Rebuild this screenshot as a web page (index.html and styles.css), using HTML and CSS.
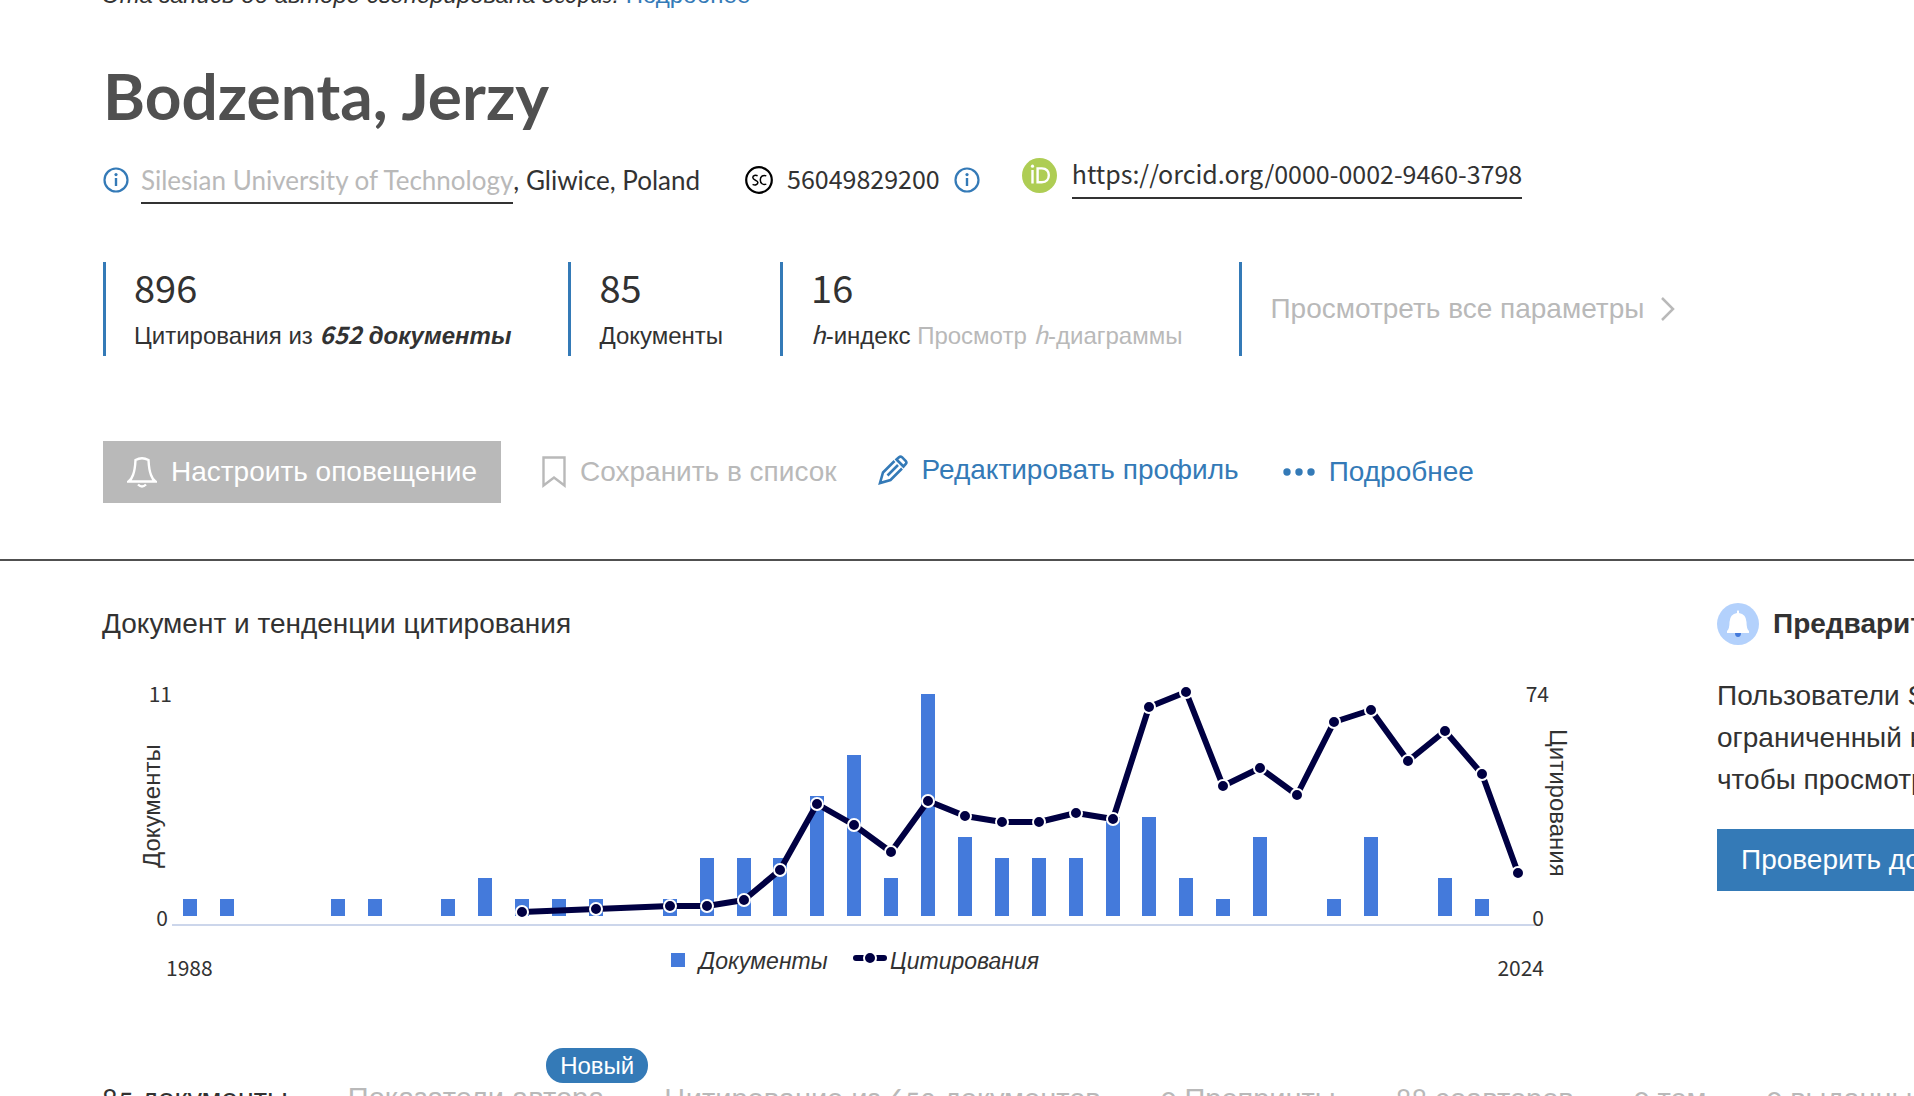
FILE: index.html
```html
<!DOCTYPE html>
<html lang="ru">
<head>
<meta charset="utf-8">
<title>Bodzenta, Jerzy</title>
<link rel="stylesheet" href="styles.css">
</head>
<body>
<main class="page">
  <header class="profile">
    <p class="note">Эта запись об авторе сгенерирована <span class="humanist">Scopus</span>. <a class="note-link" href="#about">Подробнее</a></p>
    <h1 class="name humanist">Bodzenta, Jerzy</h1>

    <div class="ids latin">
      <div class="id-group affiliation humanist">
        <svg class="info" viewBox="0 0 26 26" aria-hidden="true"><circle cx="13" cy="13" r="11.5" fill="none" stroke="currentColor" stroke-width="2.2"/><path d="M13 11v8" stroke="currentColor" stroke-width="2.4"/><circle cx="13" cy="7.6" r="1.6" fill="currentColor"/></svg>
        <span><a class="underlined muted" href="#affiliation">Silesian University of Technology</a>, Gliwice, Poland</span>
      </div>
      <div class="id-group scopus-id">
        <svg class="sc" viewBox="0 0 28 28" aria-hidden="true"><circle cx="14" cy="14" r="12.8" fill="none" stroke="#000" stroke-width="2.2"/><path d="M12.6 9.8C10.5 8.8 7.8 9.5 7.8 11.6c0 3 5.1 2.2 5.1 5 0 2.200-3 2.900-5.300 1.700M21.300 9.900c-3.500-1.400-6 .8-6 4.100s2.600 5.300 6 4.100" fill="none" stroke="#000" stroke-width="1.500"/></svg>
        <span>56049829200</span>
        <svg class="info" viewBox="0 0 26 26" aria-hidden="true"><circle cx="13" cy="13" r="11.5" fill="none" stroke="currentColor" stroke-width="2.2"/><path d="M13 11v8" stroke="currentColor" stroke-width="2.4"/><circle cx="13" cy="7.6" r="1.6" fill="currentColor"/></svg>
      </div>
      <div class="id-group orcid">
        <svg class="orcid-icon" viewBox="0 0 35 35" aria-hidden="true"><circle cx="17.500" cy="17.500" r="17.500" fill="#aecd54"/><g fill="none" stroke="#fff" stroke-width="2.400"><path d="M10.500 12v13.500M15.600 10.400v13.900h4.200c4.800 0 7-3.200 7-7s-2.200-6.900-7-6.900z"/></g><circle cx="10.500" cy="8.200" r="1.600" fill="#fff"/></svg>
        <a class="underlined" href="#orcid">https://orcid.org/0000-0002-9460-3798</a>
      </div>
    </div>

    <div class="stats">
      <div class="stat"><span class="figure latin">896</span><span class="label">Цитирования из <b><i><span class="latin">652</span> документы</i></b></span></div>
      <div class="stat"><span class="figure latin">85</span><span class="label">Документы</span></div>
      <div class="stat"><span class="figure latin">16</span><span class="label"><i class="latin">h</i>-индекс <a class="muted" href="#h">Просмотр <i class="latin">h</i>-диаграммы</a></span></div>
      <div class="stat stat-link"><a class="muted" href="#metrics">Просмотреть все параметры</a><svg class="chevron" viewBox="0 0 16 26" aria-hidden="true"><path d="M2 2l11 11L2 24" fill="none" stroke="currentColor" stroke-width="2.500"/></svg></div>
    </div>

    <div class="actions">
      <button class="action primary" type="button">
        <svg class="bell" viewBox="0 0 30 32" aria-hidden="true"><g fill="none" stroke="currentColor" stroke-width="2.400"><path d="M8.500 4Q15 .500 21.500 4Q22 14 24 19Q25.500 23.500 28.500 25.500H1.500Q4.500 23.500 6 19Q8 14 8.500 4z"/><path d="M11 28.500Q15 32.500 19 28.500"/></g></svg>Настроить оповещение</button>
      <button class="action muted save" type="button">
        <svg class="bookmark" viewBox="0 0 24 32" aria-hidden="true"><path d="M1.500 1.500h21v28L12 21.500 1.500 29.500z" fill="none" stroke="currentColor" stroke-width="2.400"/></svg>Сохранить в список</button>
      <button class="action edit" type="button">
        <svg class="pencil" viewBox="0 0 30 30" aria-hidden="true"><g fill="none" stroke="currentColor" stroke-width="2.600"><path d="M16.500 6L5 17.500 2 28l10.500-3L24 13.500M9.500 20.500L20 10M18.500 4.500l2.500-2.300q1.500-1.200 3 0l3.800 3.800q1.200 1.500 0 3L25.500 11.500z"/></g></svg>Редактировать профиль</button>
      <button class="action more" type="button">
        <svg class="dots" viewBox="0 0 32 8" fill="currentColor" aria-hidden="true"><circle cx="4" cy="4" r="3.700"/><circle cx="16" cy="4" r="3.700"/><circle cx="28" cy="4" r="3.700"/></svg>Подробнее</button>
    </div>
  </header>

  <div class="content">
    <section class="trends">
      <h2 class="section-title">Документ и тенденции цитирования</h2>
      <svg class="chart" id="chart" viewBox="0 0 1555 320" role="img" aria-label="Документ и тенденции цитирования">
        <path d="M70 255H1436" stroke="#ccd6eb" stroke-width="2"/>
        <g id="bars" fill="#447adb"></g>
        <polyline id="line" fill="none" stroke="#000042" stroke-width="6" stroke-linejoin="round" stroke-linecap="round"/>
        <g id="dots" fill="#000042" stroke="#fff" stroke-width="2"></g>
        <g class="axis-number">
          <text x="70" y="32" text-anchor="end">11</text>
          <text x="66" y="256" text-anchor="end">0</text>
          <text x="64" y="306">1988</text>
          <text x="1447" y="32" text-anchor="end">74</text>
          <text x="1442" y="256" text-anchor="end">0</text>
          <text x="1442" y="306" text-anchor="end">2024</text>
        </g>
        <g class="axis-title">
          <text transform="translate(58 198) rotate(-90)">Документы</text>
          <text transform="translate(1448 59) rotate(90)">Цитирования</text>
        </g>
        <g class="legend">
          <rect x="569" y="283" width="14" height="14" fill="#447adb"/>
          <text x="597" y="299">Документы</text>
          <path d="M754 288h28" stroke="#000042" stroke-width="6" stroke-linecap="round"/>
          <circle cx="768" cy="288" r="6" fill="#000042" stroke="#fff" stroke-width="2"/>
          <text x="788" y="299">Цитирования</text>
        </g>
      </svg>
    </section>

    <aside class="preview">
      <h2 class="preview-title">
        <svg class="preview-icon" viewBox="0 0 42 42" aria-hidden="true"><circle cx="21" cy="21" r="21" fill="#b3d1fc"/><path d="M18 30h6q0 4-3 4t-3-4z" fill="#447adb"/><path d="M20 8q1-1.500 2 0v2q7 1 7.500 9 0 7 2.500 9v2H10v-2q2.500-2 2.500-9Q13 11 20 10z" fill="#fff"/></svg>Предварительный</h2>
      <p class="preview-text">Пользователи Scopus<br>ограниченный к<br>чтобы просмотреть</p>
      <button class="action check" type="button">Проверить доступ</button>
    </aside>
  </div>

  <nav class="tabs">
    <a class="tab current" href="#docs"><span class="tab-number">85</span> документы</a>
    <a class="tab" href="#metrics">Показатели автора<span class="badge">Новый</span></a>
    <a class="tab" href="#cited">Цитирование из <span class="tab-number">652</span> документов</a>
    <a class="tab" href="#preprints"><span class="tab-number">0</span> Препринты</a>
    <a class="tab" href="#coauthors"><span class="tab-number">88</span> соавторов</a>
    <a class="tab" href="#topics"><span class="tab-number">0</span> тем</a>
    <a class="tab" href="#grants"><span class="tab-number">0</span> выданные</a>
  </nav>
</main>
<script src="chart.js"></script>
</body>
</html>
```
FILE: chart.js
```js
// Yearly values, 1988 to 2024; null means no citation point for that year.
const documents = [1,1,0,0,1,1,0,1,2,1,1,1,0,1,3,3,3,6,8,2,11,4,3,3,3,5,5,2,1,4,0,1,4,0,2,1,0];
const citations = [null,null,null,null,null,null,null,null,null,1,null,2,null,3,3,5,15,37,30,21,38,33,31,31,34,32,69,74,43,49,40,64,68,51,61,47,14];
const NS = "http://www.w3.org/2000/svg";
const firstX = 88, step = 36.9, base = 246;

function add(parent, name, attributes) {
  const node = document.createElementNS(NS, name);
  for (const key in attributes) node.setAttribute(key, attributes[key]);
  document.getElementById(parent).appendChild(node);
}

documents.forEach((value, i) => {
  if (!value) return;
  const height = Math.floor(value * 20.5 - 3);
  add("bars", "rect", { x: Math.round(firstX + i * step) - 7, y: base - height, width: 14, height });
});

const points = [];
citations.forEach((value, i) => {
  if (value === null) return;
  points.push([Math.round(firstX + i * step), Math.round(245 - value * 3.01)]);
});
document.getElementById("line").setAttribute("points", points.map(p => p.join(",")).join(" "));
points.forEach(([cx, cy]) => add("dots", "circle", { cx, cy, r: 6 }));
```
FILE: styles.css
```css
* { box-sizing: border-box; }
html { overflow: hidden; }
body { margin: 0; background: #fff; color: #323232; font: 28px/42px "Liberation Sans", Arial, sans-serif; }
h1, h2, p { margin: 0; }
a { color: inherit; text-decoration: none; }
svg { flex: none; }
.latin { font-family: "Noto Sans CJK JP", "Liberation Sans", sans-serif; }
.humanist { font-family: Lato, "Liberation Sans", sans-serif; }
.muted { color: #b9b9b9; }

.page { margin-top: -21px; overflow: hidden; white-space: nowrap; }
.profile { padding: 0 102px 56px 103px; border-bottom: 2px solid #505050; }
.note { font-size: 24px; line-height: 30px; font-style: italic; }
.note-link { color: #347ab7; font-style: normal; }
.name { margin-top: 42px; color: #505050; font-size: 64px; line-height: 88px; font-weight: 700; }

.ids { display: flex; align-items: flex-start; margin-top: 14px; font-size: 25px; line-height: 28px; }
.id-group { display: flex; align-items: flex-start; gap: 12px; }
.affiliation { margin-top: 10px; font-size: 26px; line-height: 32px; }
.scopus-id { margin: 10px 0 0 45px; gap: 14px; }
.orcid { margin: 4px 0 0 42px; gap: 15px; }
.underlined { display: inline-block; padding-bottom: 6px; border-bottom: 2px solid #323232; }
.orcid .underlined { padding-top: 1px; padding-bottom: 10px; }
.info { width: 26px; height: 26px; margin-top: 3px; color: #347ab7; }
.sc { width: 28px; height: 28px; margin-top: 2px; }
.orcid-icon { width: 35px; height: 35px; }

.stats { display: flex; margin-top: 58px; }
.stat { display: flex; flex-direction: column; height: 94px; padding: 3px 57px 0 28px; border-left: 3px solid #347ab7; }
.figure { font-size: 38px; line-height: 44px; }
.label { margin-top: 12px; font-size: 24px; line-height: 30px; }
.label .latin { line-height: 20px; }
.stat-link { flex-direction: row; align-items: center; gap: 16px; padding-top: 0; }
.chevron { width: 16px; height: 26px; color: #b9b9b9; }

.actions { display: flex; align-items: center; margin-top: 85px; }
.action { display: flex; align-items: center; height: 62px; padding: 0; border: 0; background: none; color: #347ab7; font: inherit; white-space: nowrap; }
.action.primary { padding: 0 24px; gap: 14px; background: #b9b9b9; color: #fff; }
.action.muted { color: #b9b9b9; }
.save { margin-left: 41px; gap: 14px; }
.edit { margin: -4px 0 0 41px; gap: 14px; }
.more { margin-left: 44px; gap: 14px; }
.bell { width: 30px; height: 32px; }
.bookmark { width: 24px; height: 32px; }
.pencil { width: 30px; height: 30px; }
.dots { width: 32px; height: 8px; }

.content { display: grid; grid-template-columns: minmax(0, 1fr) 197px; gap: 60px; padding: 42px 0 0 102px; }
.section-title { font-size: 28px; line-height: 42px; font-weight: 400; }
.chart { display: block; width: 100%; margin-top: 25px; }
.chart text { fill: #323232; font-size: 24px; }
.chart .axis-number text { font-family: "Noto Sans CJK JP", sans-serif; font-size: 21px; }
.chart .legend text { font-size: 23px; font-style: italic; }

.preview-title { display: flex; align-items: center; gap: 14px; font-size: 28px; line-height: 42px; }
.preview-icon { width: 42px; height: 42px; }
.preview-text { margin-top: 30px; }
.check { margin-top: 28px; padding: 0 24px; background: #347ab7; color: #fff; }

.tabs { display: flex; gap: 60px; margin-top: 87px; padding-left: 102px; color: #b9b9b9; font-size: 29px; }
.tab { position: relative; flex: none; }
.tab.current { color: #323232; }
.tab-number { font-family: Lato, "Liberation Sans", sans-serif; font-variant-numeric: oldstyle-nums; }
.badge { position: absolute; right: -44px; top: -29px; padding: 0 14px; border-radius: 17px; background: #347ab7; color: #fff; font-size: 24px; line-height: 35px; }
```
